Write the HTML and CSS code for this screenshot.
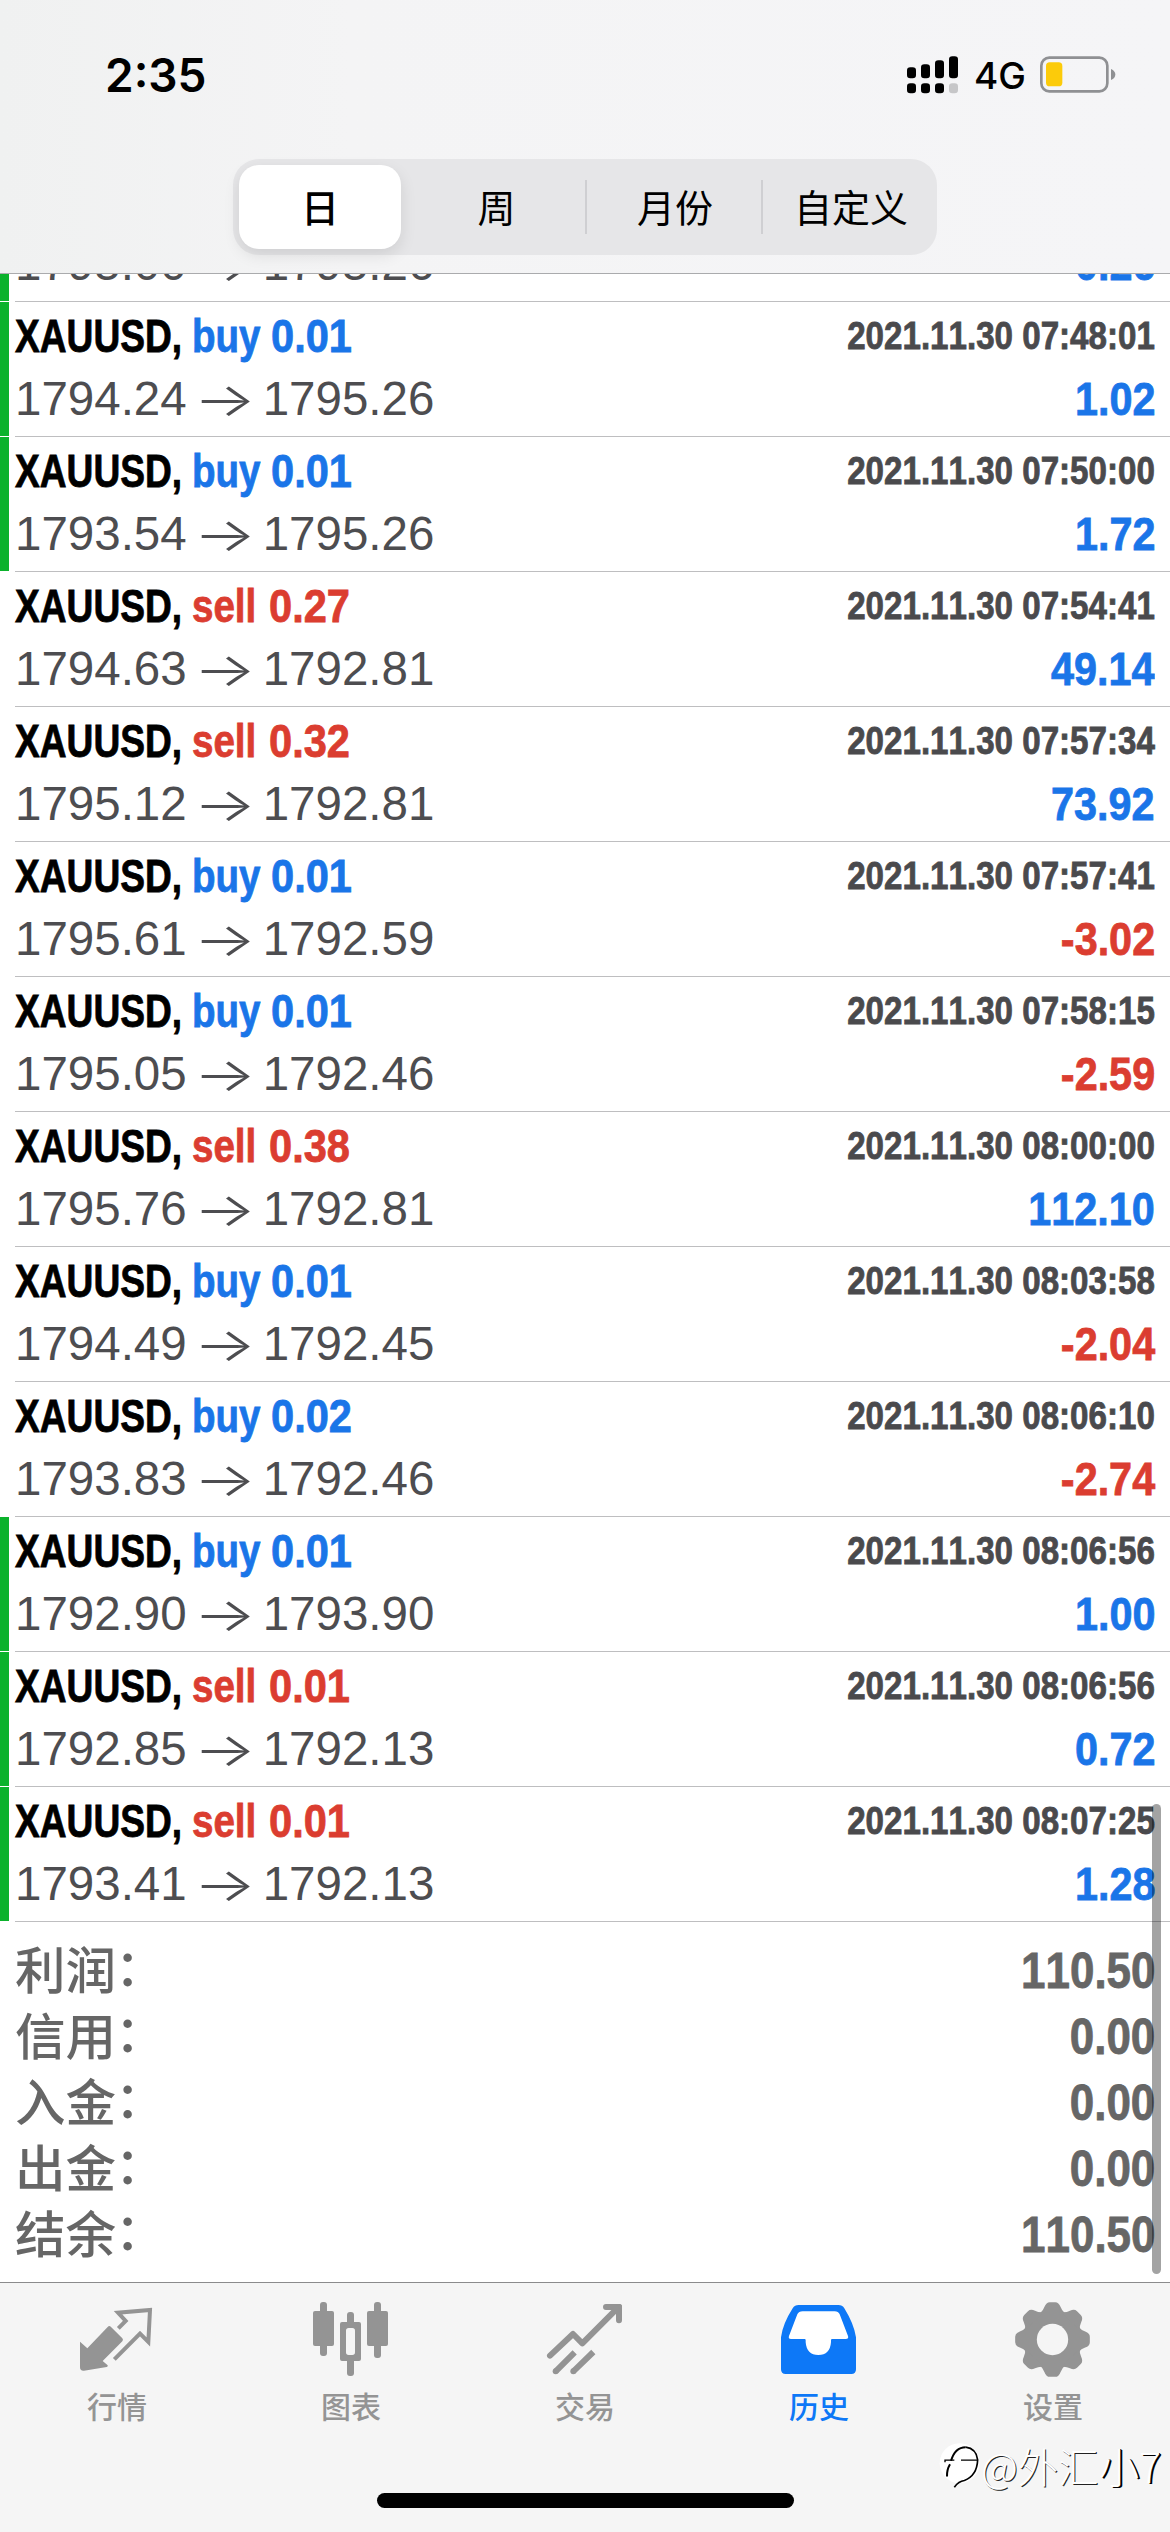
FILE: index.html
```html
<!DOCTYPE html>
<html lang="zh-CN">
<head>
<meta charset="utf-8">
<title>历史</title>
<link rel="stylesheet" href="styles.css">
</head>
<body>
<div class="screen">
  <header class="header">
    <div class="status">
      <span class="clock">2:35</span>
      <div class="status-right">
        <svg class="signal" viewBox="81 47 153 114">
          <rect x="81" y="81" width="27" height="33" rx="10"/><rect x="123" y="72" width="27" height="42" rx="10"/><rect x="165" y="60" width="27" height="54" rx="10"/><rect x="207" y="48" width="27" height="66" rx="10"/>
          <rect x="81" y="129" width="27" height="30" rx="10"/><rect x="123" y="129" width="27" height="30" rx="10"/><rect x="165" y="129" width="27" height="30" rx="10"/><rect x="207" y="129" width="27" height="30" rx="10" fill="#c6c6c8"/>
        </svg>
        <span class="network">4G</span>
        <svg class="battery" viewBox="480 47 228 111">
          <rect x="484" y="52" width="198" height="101" rx="24" fill="none" stroke="#8f9093" stroke-width="8"/>
          <rect x="498" y="66" width="49" height="72" rx="11" fill="#fccb0a"/>
          <path d="M693 86q13 6 13 16.500t-13 16.500z" fill="#8f9093"/>
        </svg>
      </div>
    </div>
    <nav class="segments">
      <span class="segment segment-on">日</span>
      <span class="segment">周</span>
      <span class="segment segment-line">月份</span>
      <span class="segment segment-line">自定义</span>
    </nav>
  </header>

  <main class="content">
    <div class="trades">
      <article class="trade closed-tp"><div class="line"><span class="symbol">XAUUSD,</span><span class="side buy">buy</span><span class="volume buy">0.01</span><time class="time">2021.11.30 07:46:00</time></div><div class="line"><span class="price">1795.00</span><span class="arrow">→</span><span class="price">1795.26</span><span class="amount plus">0.26</span></div></article>
      <article class="trade closed-tp"><div class="line"><span class="symbol">XAUUSD,</span><span class="side buy">buy</span><span class="volume buy">0.01</span><time class="time">2021.11.30 07:48:01</time></div><div class="line"><span class="price">1794.24</span><span class="arrow">→</span><span class="price">1795.26</span><span class="amount plus">1.02</span></div></article>
      <article class="trade closed-tp"><div class="line"><span class="symbol">XAUUSD,</span><span class="side buy">buy</span><span class="volume buy">0.01</span><time class="time">2021.11.30 07:50:00</time></div><div class="line"><span class="price">1793.54</span><span class="arrow">→</span><span class="price">1795.26</span><span class="amount plus">1.72</span></div></article>
      <article class="trade"><div class="line"><span class="symbol">XAUUSD,</span><span class="side sell">sell</span><span class="volume sell">0.27</span><time class="time">2021.11.30 07:54:41</time></div><div class="line"><span class="price">1794.63</span><span class="arrow">→</span><span class="price">1792.81</span><span class="amount plus">49.14</span></div></article>
      <article class="trade"><div class="line"><span class="symbol">XAUUSD,</span><span class="side sell">sell</span><span class="volume sell">0.32</span><time class="time">2021.11.30 07:57:34</time></div><div class="line"><span class="price">1795.12</span><span class="arrow">→</span><span class="price">1792.81</span><span class="amount plus">73.92</span></div></article>
      <article class="trade"><div class="line"><span class="symbol">XAUUSD,</span><span class="side buy">buy</span><span class="volume buy">0.01</span><time class="time">2021.11.30 07:57:41</time></div><div class="line"><span class="price">1795.61</span><span class="arrow">→</span><span class="price">1792.59</span><span class="amount minus">-3.02</span></div></article>
      <article class="trade"><div class="line"><span class="symbol">XAUUSD,</span><span class="side buy">buy</span><span class="volume buy">0.01</span><time class="time">2021.11.30 07:58:15</time></div><div class="line"><span class="price">1795.05</span><span class="arrow">→</span><span class="price">1792.46</span><span class="amount minus">-2.59</span></div></article>
      <article class="trade"><div class="line"><span class="symbol">XAUUSD,</span><span class="side sell">sell</span><span class="volume sell">0.38</span><time class="time">2021.11.30 08:00:00</time></div><div class="line"><span class="price">1795.76</span><span class="arrow">→</span><span class="price">1792.81</span><span class="amount plus">112.10</span></div></article>
      <article class="trade"><div class="line"><span class="symbol">XAUUSD,</span><span class="side buy">buy</span><span class="volume buy">0.01</span><time class="time">2021.11.30 08:03:58</time></div><div class="line"><span class="price">1794.49</span><span class="arrow">→</span><span class="price">1792.45</span><span class="amount minus">-2.04</span></div></article>
      <article class="trade"><div class="line"><span class="symbol">XAUUSD,</span><span class="side buy">buy</span><span class="volume buy">0.02</span><time class="time">2021.11.30 08:06:10</time></div><div class="line"><span class="price">1793.83</span><span class="arrow">→</span><span class="price">1792.46</span><span class="amount minus">-2.74</span></div></article>
      <article class="trade closed-tp"><div class="line"><span class="symbol">XAUUSD,</span><span class="side buy">buy</span><span class="volume buy">0.01</span><time class="time">2021.11.30 08:06:56</time></div><div class="line"><span class="price">1792.90</span><span class="arrow">→</span><span class="price">1793.90</span><span class="amount plus">1.00</span></div></article>
      <article class="trade closed-tp"><div class="line"><span class="symbol">XAUUSD,</span><span class="side sell">sell</span><span class="volume sell">0.01</span><time class="time">2021.11.30 08:06:56</time></div><div class="line"><span class="price">1792.85</span><span class="arrow">→</span><span class="price">1792.13</span><span class="amount plus">0.72</span></div></article>
      <article class="trade closed-tp"><div class="line"><span class="symbol">XAUUSD,</span><span class="side sell">sell</span><span class="volume sell">0.01</span><time class="time">2021.11.30 08:07:25</time></div><div class="line"><span class="price">1793.41</span><span class="arrow">→</span><span class="price">1792.13</span><span class="amount plus">1.28</span></div></article>
    </div>
    <dl class="summary">
      <div class="total"><dt>利润<span class="colon">：</span></dt><dd>110.50</dd></div>
      <div class="total"><dt>信用<span class="colon">：</span></dt><dd>0.00</dd></div>
      <div class="total"><dt>入金<span class="colon">：</span></dt><dd>0.00</dd></div>
      <div class="total"><dt>出金<span class="colon">：</span></dt><dd>0.00</dd></div>
      <div class="total"><dt>结余<span class="colon">：</span></dt><dd>110.50</dd></div>
    </dl>
    <div class="scrollbar"></div>
  </main>

  <footer class="footer">
    <nav class="tabs">
      <a class="tab">
        <svg class="tab-icon" viewBox="36 54 270 246">
          <path fill="currentColor" d="M60 185L82 205L143 141q5-6 10 0L187 175q4 5 0 9L128 243L143 256q2 4-3 5L72 272q-12 1-12-10z"/>
          <path fill="none" stroke="currentColor" stroke-width="12" stroke-linejoin="miter" d="M175 145L197 123L174 98L270 90L265 186L240 161L163 238" stroke-linecap="butt"/>
        </svg>
        <span>行情</span>
      </a>
      <a class="tab">
        <svg class="tab-icon" viewBox="738 54 270 246" fill="currentColor">
          <rect x="759" y="93" width="63" height="105" rx="6"/><rect x="780" y="66" width="21" height="162" rx="9"/>
          <rect x="921" y="93" width="63" height="105" rx="6"/><rect x="942" y="66" width="21" height="168" rx="9"/>
          <rect x="861" y="96" width="21" height="45" rx="9"/><rect x="861" y="230" width="21" height="58" rx="9"/>
          <path fill-rule="evenodd" d="M846 126h51q6 0 6 6v105q0 6-6 6h-51q-6 0-6-6V132q0-6 6-6zM866 144q-8 0-8 8v65q0 8 8 8h11q8 0 8-8v-65q0-8-8-8z"/>
        </svg>
        <span>图表</span>
      </a>
      <a class="tab">
        <svg class="tab-icon" viewBox="30 54 270 246" fill="none" stroke="currentColor" stroke-width="18">
          <path stroke-linecap="round" stroke-linejoin="round" d="M60 227L129 162L157 190L264 83M228 81H267V121"/>
          <path d="M258 72H269q7 0 7 8V92z" fill="currentColor" stroke="none"/>
          <path d="M77 274L134 217M130 274L190 216"/>
          <circle cx="77" cy="274" r="9" fill="currentColor" stroke="none"/><circle cx="130" cy="274" r="9" fill="currentColor" stroke="none"/>
        </svg>
        <span>交易</span>
      </a>
      <a class="tab tab-on">
        <svg class="tab-icon" viewBox="732 54 270 246">
          <path fill="currentColor" d="M806 75H925q12 0 18 10Q972 132 978 172V268q0 14-14 14H767q-14 0-14-14V172Q758 132 788 85Q794 75 806 75z"/>
          <path fill="#fff" d="M818 94H914q11 0 15 9L954 168q3 9-7 9H906q-3 0-3 4v6q-3 38-38 38t-38-38v-6q0-4-3-4H783q-9 0-6-9L802 103q4-9 16-9z"/>
        </svg>
        <span>历史</span>
      </a>
      <a class="tab">
        <svg class="tab-icon" viewBox="324 54 270 246" fill="currentColor">
          <g transform="translate(457.500 178.500)">
            <circle r="88"/>
            <path id="cog" d="M-38-78Q-28-86-24-98Q-19-112-8-112H8Q19-112 24-98Q28-86 38-78z"/>
            <use href="#cog" transform="rotate(45)"/><use href="#cog" transform="rotate(90)"/><use href="#cog" transform="rotate(135)"/><use href="#cog" transform="rotate(180)"/><use href="#cog" transform="rotate(225)"/><use href="#cog" transform="rotate(270)"/><use href="#cog" transform="rotate(315)"/>
            <circle r="47" fill="#f5f5f5"/>
          </g>
        </svg>
        <span>设置</span>
      </a>
    </nav>
    <div class="home-indicator"></div>
    <div class="watermark">
      <svg class="watermark-logo" viewBox="84 500 126 140">
        <circle cx="146" cy="560" r="60" fill="#fff"/>
        <path d="M108 600Q107 580 117 563M120 553Q132 512 164 512" fill="none" stroke="#000" stroke-width="6"/>
        <path d="M164 512Q196 516 200 550Q198 598 160 612Q143 614 130 632" fill="none" stroke="#000" stroke-width="5"/>
        <path d="M102 557v-6H130M150 551H200" fill="none" stroke="#000" stroke-width="4"/>
      </svg>
      <span>@外汇<b>小7</b></span>
    </div>
  </footer>
</div>
</body>
</html>
```
FILE: styles.css
```css
* { box-sizing: border-box; }

body {
  margin: 0;
  background: #fff;
  font-family: "Liberation Sans", "Noto Sans CJK SC", sans-serif;
  font-kerning: none;
}

.screen {
  display: flex;
  flex-direction: column;
  width: 1170px;
  height: 2532px;
  overflow: hidden;
}

/* Header */
.header {
  flex: none;
  height: 274px;
  border-bottom: 1px solid #aaabad;
  background: linear-gradient(90deg, #f0f1f1, #f4f4f5 30%, #f5f5f7);
}

.status {
  display: flex;
  justify-content: space-between;
  align-items: center;
  height: 159px;
  padding: 0 54px 10px 105px;
  font-family: Inter, sans-serif;
}

.clock { font-size: 46px; font-weight: 600; }
.status-right { display: flex; align-items: center; }
.signal { width: 51px; height: 38px; }
.network { width: 50px; margin: 1px 16px 0; font-size: 37px; font-weight: 500; }
.battery { width: 76px; height: 37px; }

.segments {
  display: grid;
  grid-template-columns: repeat(4, 176px);
  width: 704px;
  height: 96px;
  margin: 0 auto;
  border-radius: 26px;
  background: #e6e6e8;
  font: 400 38px/94px "Noto Sans CJK SC", sans-serif;
  text-align: center;
}

.segment { color: #000; padding-right: 1px; }

.segment-on {
  width: 162px;
  height: 84px;
  margin: 6px 0 0 6px;
  padding: 0;
  border-radius: 20px;
  background: #fff;
  box-shadow: 0 6px 16px rgba(0, 0, 0, .1);
  font-weight: 500;
  line-height: 82px;
}

.segment-line {
  padding: 0 0 0 4px;
  background: linear-gradient(#cfcfd2, #cfcfd2) 0 21px / 2px 54px no-repeat;
}

/* Trade list */
.content {
  position: relative;
  height: 2008px;
  overflow: hidden;
}

.trades { margin-top: -107px; }

.trade {
  height: 135px;
  margin-left: 15px;
  padding: 4px 15px 0 0;
  border-bottom: 1px solid #bebec0;
}

.closed-tp {
  margin-left: 0;
  padding-left: 15px;
  border-bottom: 0;
  background:
    linear-gradient(#0bb22c, #0bb22c) 0 0 / 9px 134px no-repeat,
    linear-gradient(#bebec0, #bebec0) 15px 134px / 1155px 1px no-repeat;
}

.line {
  display: flex;
  height: 60px;
  font-size: 47px;
  line-height: 60px;
  white-space: nowrap;
}

.line + .line { height: 66px; line-height: 66px; }

.symbol, .side, .volume, .time, .amount, .total dd {
  font-weight: 700;
  -webkit-text-stroke: .8px currentColor;
}

.symbol { width: 177px; color: #000; transform: scaleX(.79); transform-origin: left; }
.side { transform: scaleX(.82); transform-origin: left; }
.side.buy { width: 79px; }
.side.sell { width: 77px; }
.volume { transform: scaleX(.885); transform-origin: left; }

.buy, .plus { color: #1a75e8; }
.sell, .minus { color: #db3d30; }

.time {
  margin-left: auto;
  color: #4a4a4d;
  font-size: 38px;
  transform: scaleX(.872);
  transform-origin: right;
}

.price { color: #4d4d50; font-size: 47.500px; }

.arrow {
  width: 76px;
  color: #4d4d50;
  font-family: Inter, sans-serif;
  font-weight: 300;
  text-align: center;
  transform: scaleX(1.400);
}

.amount {
  margin-left: auto;
  transform: scaleX(.88);
  transform-origin: right;
}

/* Totals */
.summary { margin: 0; padding: 16px 15px 0; color: #666; }

.total {
  display: flex;
  justify-content: space-between;
  height: 66px;
  font-size: 50.500px;
  line-height: 66px;
}

.total dt { font-family: "Noto Sans CJK SC", sans-serif; font-weight: 500; line-height: 59px; }
.total dd { margin: 0; transform: scaleX(.87); transform-origin: right; }
.colon { position: relative; top: -3px; left: -1px; }

.scrollbar {
  position: absolute;
  top: 1530px;
  right: 9px;
  width: 9px;
  height: 470px;
  border-radius: 5px;
  background: rgba(0, 0, 0, .36);
}

/* Tab bar */
.footer {
  position: relative;
  flex: none;
  height: 250px;
  border-top: 1px solid #8b8b8c;
  background: #f5f5f5;
}

.tabs { display: grid; grid-template-columns: repeat(5, 1fr); height: 210px; }

.tab {
  display: flex;
  flex-direction: column;
  align-items: center;
  padding-top: 15px;
  color: #949494;
  font: 400 30px/40px "Noto Sans CJK SC", sans-serif;
}

.tab-on { color: #0d78f7; }
.tab span { font-weight: 500; }
.tab-icon { width: 90px; height: 82px; margin-bottom: 5px; }

.home-indicator {
  width: 417px;
  height: 15px;
  margin: 0 auto;
  border-radius: 8px;
  background: #000;
}

.watermark {
  position: absolute;
  right: 9px;
  bottom: 38px;
  display: flex;
  align-items: center;
  color: #fff;
  font: 300 40.500px/56px "Noto Sans CJK SC", sans-serif;
  text-shadow: 1px 1px 0 #222;
}

.watermark b { font-weight: 300; text-shadow: 1px 0 0 #000, 2px 1px 0 #000; }
.watermark-logo { width: 42px; height: 47px; }
```
